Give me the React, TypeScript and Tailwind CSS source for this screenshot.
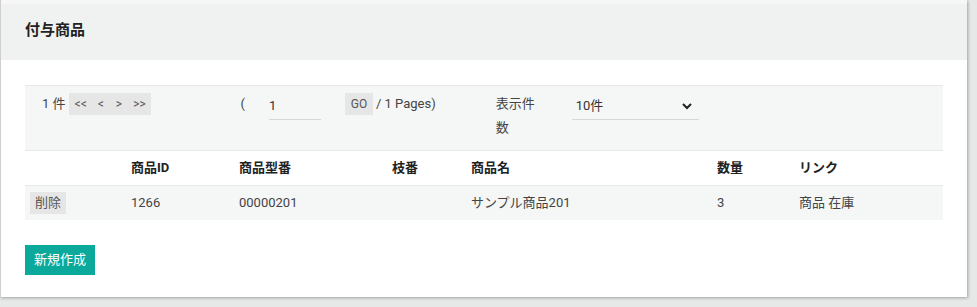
import React from 'react';

const font = { fontFamily: 'Roboto, "Noto Sans CJK JP", sans-serif' };

const cols = [101, 108, 153, 79, 246, 82, 149];

const App: React.FC = () => {
  return (
    <div className="w-[977px] h-[307px] bg-[#e6e7e7] overflow-hidden text-[13px] text-[#333]" style={font}>
      <div className="w-[967px] h-[297px] bg-white shadow-[1px_1px_3px_rgba(0,0,0,0.3)] border-l border-[#cfcfcf]">
        <div className="h-[4px] bg-[#f6f6f6]" />
        <div className="h-[56px] bg-[#f0f2f1] flex items-center px-[24px] pb-[3px]">
          <h2 className="text-[15px] font-bold text-[#222]">付与商品</h2>
        </div>

        <div className="px-[24px] pt-[25px]">
          {/* pager */}
          <div className="h-[65px] bg-[#f5f7f6] border-t border-[#e7e8e8] flex items-start pt-[7px] text-[#444]">
            <span className="ml-[17px] mt-[3px] leading-[16px]">1 件</span>
            <div className="ml-[3px] h-[22px] w-[82px] bg-[#e5e6e5] flex items-center text-[12px] text-[#555]">
              <button className="ml-[6px]">&lt;&lt;</button>
              <button className="ml-[11px]">&lt;</button>
              <button className="ml-[12px]">&gt;</button>
              <button className="ml-[11px]">&gt;&gt;</button>
            </div>
            <span className="ml-[90px] mt-[3px] leading-[16px]">(</span>
            <div className="ml-[24px] w-[52px] h-[27px] border-b border-[#d8d8d8] pt-[5px] leading-[16px] text-[#333]">1</div>
            <button className="ml-[24px] h-[22px] w-[28px] bg-[#e5e6e5] text-[12px] text-[#555]">GO</button>
            <span className="ml-[3px] mt-[3px] leading-[16px]">/ 1 Pages)</span>
            <span className="ml-[60px] mt-[3px] w-[40px] leading-[24px] -translate-y-[4px]">表示件数</span>
            <div className="ml-[36px] w-[127px] h-[27px] border-b border-[#d8d8d8] flex items-center justify-between pl-[4px] pr-[6px] text-[#333]">
              <span>10件</span>
              <svg width="12" height="12" viewBox="0 0 12 12">
                <path d="M2 4 L6 8 L10 4" fill="none" stroke="#222" strokeWidth="2" />
              </svg>
            </div>
          </div>

          {/* table */}
          <table className="w-[918px] border-collapse table-fixed">
            <colgroup>
              {cols.map((w, i) => (
                <col key={i} style={{ width: w }} />
              ))}
            </colgroup>
            <thead>
              <tr className="h-[35px] border-t border-[#e7e8e8] text-left font-bold text-[#222]">
                <th className="px-[5px]"></th>
                <th className="px-[5px]">商品ID</th>
                <th className="px-[5px]">商品型番</th>
                <th className="px-[5px]">枝番</th>
                <th className="px-[5px]">商品名</th>
                <th className="px-[5px]">数量</th>
                <th className="px-[5px]">リンク</th>
              </tr>
            </thead>
            <tbody>
              <tr className="h-[34px] bg-[#f5f7f6] border-t border-[#e7e8e8] text-[#444]">
                <td className="px-[5px]">
                  <button className="h-[22px] w-[36px] bg-[#e5e6e5] text-[#555]">削除</button>
                </td>
                <td className="px-[5px]">1266</td>
                <td className="px-[5px]">00000201</td>
                <td className="px-[5px]"></td>
                <td className="px-[5px]">サンプル商品201</td>
                <td className="px-[5px]">3</td>
                <td className="px-[5px]">商品 在庫</td>
              </tr>
            </tbody>
          </table>

          <button className="mt-[25px] h-[30px] w-[70px] bg-[#0aa99b] text-white text-[13px]">新規作成</button>
        </div>
      </div>
    </div>
  );
};

export default App;
